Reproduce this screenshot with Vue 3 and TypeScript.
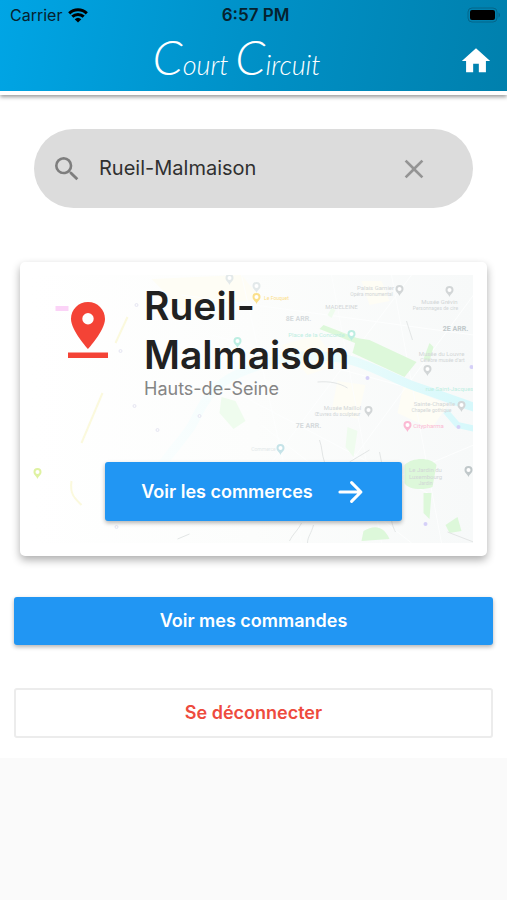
<script setup lang="ts">
import { ref } from 'vue'

interface MapLabel {
  text: string
  x: number
  y: number
  size: number
  tone: string
}

interface MapMarker {
  x: number
  y: number
  tone: string
}

const city = ref('Rueil-Malmaison')

const labels: MapLabel[] = [
  { text: 'Palais Garnier', x: 344, y: 15, size: 6, tone: 'grey' },
  { text: 'Opéra monumental', x: 340, y: 21, size: 5, tone: 'grey' },
  { text: 'Musée Grévin', x: 408, y: 29, size: 6, tone: 'grey' },
  { text: 'Personnages de cire', x: 404, y: 35, size: 5, tone: 'grey' },
  { text: 'Le Fouquet', x: 245, y: 25, size: 5, tone: 'amber' },
  { text: 'MADELEINE', x: 310, y: 34, size: 6, tone: 'grey' },
  { text: '8E ARR.', x: 267, y: 46, size: 7, tone: 'district' },
  { text: '2E ARR.', x: 424, y: 56, size: 7, tone: 'dark' },
  { text: 'Place de la Concorde', x: 285, y: 62, size: 6, tone: 'teal' },
  { text: 'Musée du Louvre', x: 410, y: 81, size: 6, tone: 'grey' },
  { text: 'Célèbre musée d’art', x: 411, y: 87, size: 5, tone: 'grey' },
  { text: 'rue Saint-Jacques', x: 418, y: 116, size: 6, tone: 'teal' },
  { text: 'Sainte-Chapelle', x: 403, y: 131, size: 6, tone: 'grey' },
  { text: 'Chapelle gothique', x: 400, y: 137, size: 5, tone: 'grey' },
  { text: 'Musée Maillol', x: 311, y: 135, size: 6, tone: 'grey' },
  { text: 'Œuvres du sculpteur', x: 306, y: 141, size: 5, tone: 'grey' },
  { text: 'Citypharma', x: 397, y: 153, size: 6, tone: 'pink' },
  { text: '7E ARR.', x: 277, y: 153, size: 7, tone: 'district' },
  { text: 'Commerce', x: 232, y: 176, size: 5, tone: 'pale' },
  { text: 'Le Jardin du', x: 394, y: 197, size: 6, tone: 'grey' },
  { text: 'Luxembourg', x: 394, y: 204, size: 6, tone: 'grey' },
  { text: 'Jardin', x: 394, y: 210, size: 5, tone: 'grey' },
]

const markers: MapMarker[] = [
  { x: 368, y: 15, tone: 'grey' },
  { x: 418, y: 16, tone: 'grey' },
  { x: 198, y: 4, tone: 'pale' },
  { x: 225, y: 12, tone: 'pale' },
  { x: 225, y: 23, tone: 'amber' },
  { x: 206, y: 67, tone: 'teal' },
  { x: 320, y: 60, tone: 'teal' },
  { x: 396, y: 95, tone: 'grey' },
  { x: 430, y: 131, tone: 'grey' },
  { x: 337, y: 136, tone: 'grey' },
  { x: 376, y: 151, tone: 'pink' },
  { x: 249, y: 174, tone: 'sky' },
  { x: 437, y: 196, tone: 'dark' },
  { x: 6, y: 198, tone: 'lime' },
]

function clearCity(): void {
  city.value = ''
}
</script>

<template>
  <div class="app">
    <header class="top">
      <div class="status">
        <span class="carrier">
          Carrier
          <svg class="wifi" viewBox="0 0 20 15" aria-hidden="true">
            <path d="M1.2 5.4a12.6 12.6 0 0 1 17.6 0M4.3 8.7a8.2 8.2 0 0 1 11.4 0" />
            <path class="dot" d="M6.7 11.2a4.8 4.8 0 0 1 6.6 0L10 14.6z" />
          </svg>
        </span>
        <span class="time">6:57 PM</span>
        <svg class="battery" viewBox="0 0 34 16" aria-hidden="true">
          <rect class="shell" x="1" y="1" width="29" height="14" rx="4" />
          <rect x="3" y="3" width="25" height="10" rx="2" />
          <path class="tip" d="M31.500 5.500c2 .8 2 4.200 0 5z" />
        </svg>
      </div>
      <div class="bar">
        <h1 class="brand"><span class="cap">C</span>ourt <span class="cap">C</span>ircuit</h1>
        <a class="home" href="#" aria-label="Accueil">
          <svg viewBox="0 0 24 24" aria-hidden="true"><path d="M10 20v-6h4v6h5v-8h3L12 3 2 12h3v8z" /></svg>
        </a>
      </div>
    </header>

    <main class="content">
      <div class="search">
        <label class="lens" for="city" aria-label="Ville">
          <svg viewBox="0 0 24 24" aria-hidden="true">
            <path d="M15.500 14h-.79l-.28-.27A6.470 6.470 0 0 0 16 9.500 6.500 6.500 0 1 0 9.500 16c1.610 0 3.090-.59 4.230-1.570l.27.28v.79l5 4.990L20.490 19l-4.990-5zm-6 0C7.010 14 5 11.990 5 9.500S7.010 5 9.500 5 14 7.010 14 9.500 11.990 14 9.500 14z" />
          </svg>
        </label>
        <input id="city" v-model="city" type="text" />
        <button class="clear" type="button" aria-label="Effacer" @click="clearCity">
          <svg viewBox="0 0 24 24" aria-hidden="true">
            <path d="M19 6.410 17.590 5 12 10.590 6.410 5 5 6.410 10.590 12 5 17.590 6.410 19 12 13.410 17.590 19 19 17.590 13.410 12z" />
          </svg>
        </button>
      </div>

      <section class="card">
        <svg class="map" viewBox="0 0 442 268" preserveAspectRatio="xMidYMid slice" aria-hidden="true">
          <defs>
            <linearGradient id="ground" x1="0" x2="1" y1="0" y2="0">
              <stop offset="0" stop-color="#ffffff" />
              <stop offset="0.5" stop-color="#fcfdfc" />
              <stop offset="1" stop-color="#f7f9f9" />
            </linearGradient>
            <linearGradient id="water" gradientUnits="userSpaceOnUse" x1="120" x2="442" y1="0" y2="0">
              <stop offset="0" stop-color="#fafefe" />
              <stop offset="0.5" stop-color="#effcfc" />
              <stop offset="1" stop-color="#d6f8fb" />
            </linearGradient>
          </defs>
          <rect width="442" height="268" fill="url(#ground)" />
          <g class="blocks">
            <path d="M120 4l90-4 20 24-80 10zM250 70l36-10 20 30-30 10zM306 106l28 4-8 34-26-8zM372 110l44 20-16 24-34-16zM330 6l20 0 8 20-20 4z" />
          </g>
          <g class="streets">
            <path d="M150 20L442 60M180 60L442 130M190 110L400 220M230 150L380 268M210 0L270 268M300 0L350 268M360 0L410 268M442 20L260 268M380 0L180 268M442 170L300 230" />
          </g>
          <g class="parks">
            <path d="M325 63l13 2 47 22-12 15-52-24z" />
            <path d="M292 50l36 14-2 5-38-15z" />
            <path d="M373 190c8-8 26-8 32 0l-4 22c-10 4-26 2-28-4zM392 218h8l-2 26-6-6zM392 84l6-16 4 4-4 14zM414 250l12-8 4 14-12 2zM332 256c10-6 20-6 26 8l-28 2z" />
            <path class="faint" d="M190 122l14 4 10 20-12 8-14-16zM316 152l10 4-4 26-8-10zM296 40l4-7 4 2-4 8z" />
          </g>
          <path class="river" d="M126 196c14-20 22-28 32-42s14-40 50-56 70-22 110-13c24 6 46 20 67 27s38 14 60 21" />
          <path class="river branch" d="M414 136l12 14 18 4" />
          <g class="rail">
            <path d="M66 42L54 68M41 118L20 168M10 206c-2 14 4 18 10 24" />
          </g>
          <g class="roads">
            <path d="M375 46l6 19M286 107c12-1 22 1 30 6M288 165c3 8 2 14 5 22M318 187l20-12M348 177l2 10M360 245c1 6 2 8 4 12M270 248c-4 8-8 10-12 18M282 250c-2 8-6 12-6 18M416 257l26 10M146 264l12-5" />
          </g>
          <rect class="tag" x="24" y="31" width="13" height="5" />
          <g class="stations">
            <circle cx="105" cy="30" r="1.500" />
            <circle cx="89" cy="76" r="1.500" />
            <circle cx="103" cy="131" r="1.500" />
            <circle cx="126" cy="155" r="1.500" />
            <circle cx="168" cy="141" r="1.500" />
            <circle cx="85" cy="252" r="1.500" />
            <circle class="metro" cx="336" cy="103" r="2" />
            <circle class="metro" cx="440" cy="92" r="2" />
            <circle class="metro" cx="427" cy="152" r="2" />
            <circle class="metro" cx="394" cy="249" r="2" />
          </g>
          <g
            v-for="marker in markers"
            :key="`${marker.x}-${marker.y}`"
            :class="['marker', marker.tone]"
            :transform="`translate(${marker.x} ${marker.y})`"
          >
            <path d="M0 6C-1 3-4 2-4-1a4 4 0 0 1 8 0c0 3-3 4-4 7z" />
            <circle cy="-1" r="2" />
          </g>
          <text
            v-for="label in labels"
            :key="label.text"
            :x="label.x"
            :y="label.y"
            :font-size="label.size"
            :class="['place', label.tone]"
          >{{ label.text }}</text>
        </svg>

        <div class="town">
          <svg class="pin" viewBox="0 0 40 56" aria-hidden="true">
            <path d="M20 0C10.500 0 3 7.400 3 17c0 11.500 17 30 17 30s17-18.500 17-30C37 7.400 29.500 0 20 0zm0 11a5.700 5.700 0 1 1 0 11.400A5.700 5.700 0 0 1 20 11zM0 50.500h40V56H0z" />
          </svg>
          <div class="names">
            <h2>Rueil-Malmaison</h2>
            <p>Hauts-de-Seine</p>
          </div>
        </div>
        <button class="solid shops" type="button">
          Voir les commerces
          <svg viewBox="0 0 24 24" aria-hidden="true"><path d="M2.500 12h18M12.500 4l8 8-8 8" /></svg>
        </button>
      </section>

      <button class="solid wide" type="button">Voir mes commandes</button>
      <button class="outline wide" type="button">Se déconnecter</button>
    </main>
  </div>
</template>

<style>
body {
  background: #fafafa;
}
</style>

<style scoped>
.app {
  font-family: Inter, "Liberation Sans", sans-serif;
  color: #212121;
}

.top {
  position: relative;
  border-bottom: 4px solid #fff;
  background: linear-gradient(100deg, #00a5e5 0%, #0090c6 52%, #0080ad 100%) padding-box;
  box-shadow: 0 2px 4px rgba(0, 0, 0, 0.4);
}

.status {
  display: grid;
  grid-template-columns: 1fr auto 1fr;
  align-items: center;
  height: 30px;
  padding: 0 6px 0 10px;
  font-size: 16px;
  color: #06222e;
}

.carrier {
  display: flex;
  align-items: center;
  gap: 6px;
}

.wifi {
  width: 20px;
  height: 15px;
  fill: none;
  stroke: #000;
  stroke-width: 3;
}

.wifi .dot {
  fill: #000;
  stroke: none;
}

.time {
  font-size: 17px;
  font-weight: 600;
}

.battery {
  justify-self: end;
  width: 34px;
  height: 16px;
}

.battery .shell {
  fill: none;
  stroke: #04668a;
}

.battery .tip {
  fill: #04668a;
}

.bar {
  display: grid;
  grid-template-columns: 1fr auto 1fr;
  align-items: center;
  height: 61px;
  padding: 0 14px;
}

.brand {
  grid-column: 2;
  margin: 0;
  padding-right: 34px;
  color: #fff;
  font-family: Lato, sans-serif;
  font-size: 27px;
  font-style: italic;
  font-weight: 300;
  line-height: 48px;
  white-space: nowrap;
}

.cap {
  font-size: 48px;
}

.home {
  justify-self: end;
  display: flex;
}

.home svg {
  width: 34px;
  height: 34px;
  fill: #fff;
}

.content {
  display: flex;
  flex-direction: column;
  padding: 34px 14px 20px;
  background: #fff;
}

.search {
  display: flex;
  align-items: center;
  height: 79px;
  margin: 0 20px;
  padding: 0 43px 0 17px;
  border-radius: 40px;
  background: #dcdcdc;
}

.lens {
  display: flex;
}

.lens svg,
.clear svg {
  width: 32px;
  height: 32px;
  fill: #7e7e7e;
}

.search input {
  flex: 1;
  min-width: 0;
  height: 30px;
  margin: 0 16px;
  padding: 0 0 2px;
  box-sizing: border-box;
  border: 0;
  outline: 0;
  background: none;
  color: #303030;
  font: 400 20px/28px Inter, "Liberation Sans", sans-serif;
}

.clear {
  display: flex;
  padding: 0;
  border: 0;
  background: none;
}

.clear svg {
  fill: #949494;
}

.card {
  position: relative;
  display: flex;
  flex-direction: column;
  justify-content: space-between;
  min-height: 294px;
  box-sizing: border-box;
  margin: 54px 6px 0;
  padding: 19px 48px 35px;
  border-radius: 5px;
  background: #fff;
  box-shadow: 0 4px 8px rgba(0, 0, 0, 0.32);
}

.map {
  position: absolute;
  inset: 13px 14px 13px 12px;
  width: calc(100% - 26px);
  height: calc(100% - 26px);
}

.blocks {
  fill: #fefdf5;
}

.parks {
  fill: #ddf8da;
}

.parks .faint {
  fill: #effcee;
}

.river {
  fill: none;
  stroke: url(#water);
  stroke-width: 9;
}

.branch {
  stroke-width: 6;
}

.rail {
  fill: none;
  stroke: #fbf9dd;
  stroke-width: 2;
  transform: translateX(30px);
}

.roads {
  fill: none;
  stroke: #e3e6e6;
}

.streets {
  fill: none;
  stroke: #fdfefe;
}

.tag {
  fill: #fbd3f7;
}

.stations {
  fill: #fafafc;
  stroke: #e6e6f2;
}

.stations .metro {
  fill: #d5d0f8;
  stroke: none;
}

.place {
  text-anchor: middle;
  fill: currentColor;
  font-family: Roboto, sans-serif;
}

.marker path {
  fill: currentColor;
}

.marker circle {
  fill: #fff;
}

.grey {
  color: #d2d6d7;
}

.pale {
  color: #e3e9ea;
}

.district {
  color: #d5dadc;
  font-weight: 700;
}

.dark {
  color: #c0c8ca;
  font-weight: 700;
}

.teal {
  color: #bdeee2;
}

.sky {
  color: #c5e3e8;
}

.amber {
  color: #fbe08a;
}

.pink {
  color: #fbb9d3;
}

.lime {
  color: #dff2a2;
}

.town {
  position: relative;
  display: flex;
  gap: 36px;
}

.pin {
  flex: none;
  width: 40px;
  height: 56px;
  margin-top: 21px;
  fill: #f44336;
}

.names h2 {
  max-width: 230px;
  margin: 0;
  font-size: 39px;
  font-weight: 600;
  line-height: 49px;
}

.names p {
  margin: 0;
  color: #858585;
  font-size: 18px;
  line-height: 20px;
}

.solid,
.outline {
  border: 0;
  border-radius: 3px;
  font: 600 18px/24px Inter, "Liberation Sans", sans-serif;
}

.solid {
  color: #fff;
  background: #2196f3;
  box-shadow: 0 2px 4px rgba(0, 0, 0, 0.3);
}

.shops {
  position: relative;
  align-self: center;
  display: flex;
  align-items: center;
  gap: 24px;
  min-height: 59px;
  padding: 0 37px 0 36px;
}

.shops svg {
  width: 28px;
  height: 28px;
  fill: none;
  stroke: #fff;
  stroke-width: 2.6;
  stroke-linecap: round;
  stroke-linejoin: round;
}

.wide {
  height: 48px;
  margin-top: 41px;
}

.outline {
  height: 50px;
  margin-top: 43px;
  border: 2px solid #ececec;
  background: #fff;
  color: #ee4b3e;
}
</style>
